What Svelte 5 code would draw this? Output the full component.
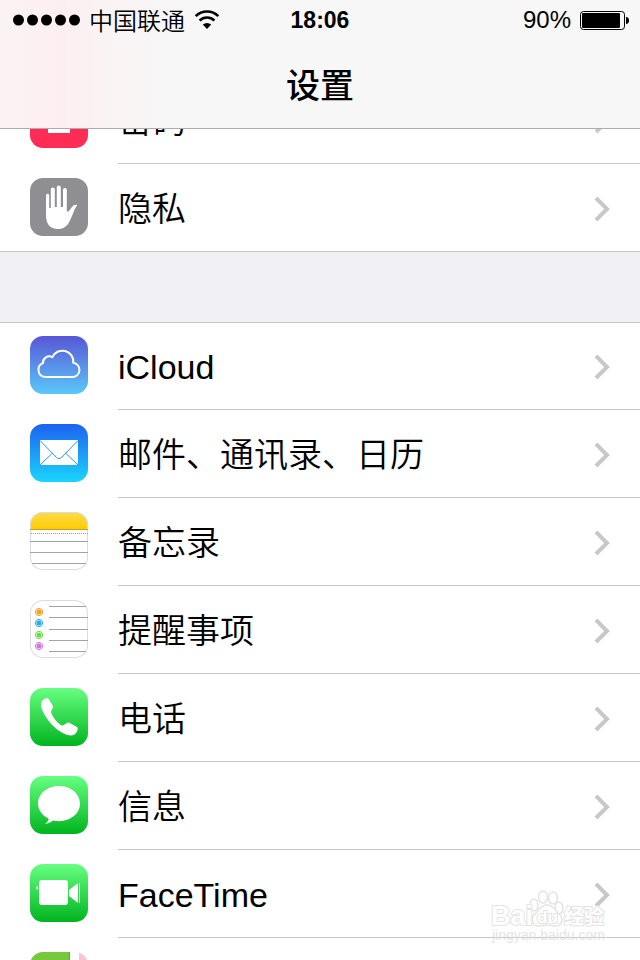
<script lang="ts">
  interface SettingsItem {
    icon: string;
    label: string;
  }

  const groups: SettingsItem[][] = [
    [
      { icon: "passcode", label: "密码" },
      { icon: "privacy", label: "隐私" },
    ],
    [
      { icon: "icloud", label: "iCloud" },
      { icon: "mail", label: "邮件、通讯录、日历" },
      { icon: "notes", label: "备忘录" },
      { icon: "reminders", label: "提醒事项" },
      { icon: "phone", label: "电话" },
      { icon: "messages", label: "信息" },
      { icon: "facetime", label: "FaceTime" },
      { icon: "maps", label: "地图" },
    ],
  ];

  const reminderDots = [
    { y: 12, color: "#ff9c1c" },
    { y: 23, color: "#1fadf8" },
    { y: 35, color: "#68dc45" },
    { y: 46, color: "#cf75e6" },
  ];
</script>

<div class="screen">
  <header class="navbar">
    <div class="status">
      <div class="carrier">
        <svg width="67" height="12" viewBox="0 0 67 12" aria-hidden="true">
          {#each [0, 1, 2, 3, 4] as n (n)}
            <circle cx={5.5 + n * 14} cy="6" r="5.5" />
          {/each}
        </svg>
        <span>中国联通</span>
        <svg width="26" height="20" viewBox="0 0 26 20" aria-hidden="true">
          <path d="M1.7 6.2a16 16 0 0 1 22.6 0" fill="none" stroke="#000" stroke-width="2.6" />
          <path d="M5.6 10.5a10.6 10.6 0 0 1 14.8 0" fill="none" stroke="#000" stroke-width="2.6" />
          <path d="M13 19l-4.200-4.400a6 6 0 0 1 8.400 0z" />
        </svg>
      </div>
      <time class="clock">18:06</time>
      <div class="power">
        <span>90%</span>
        <svg width="49" height="19" viewBox="0 0 49 19" aria-hidden="true">
          <rect x="0.5" y="0.5" width="44" height="18" rx="3" fill="none" stroke="#000" />
          <rect x="2" y="2" width="38" height="15" rx="1" />
          <path d="M46 6c2 0 3 1.5 3 3.5s-1 3.5-3 3.5z" />
        </svg>
      </div>
    </div>
    <h1>设置</h1>
  </header>

  <main>
    {#each groups as group, g (g)}
      <ul class="group">
        {#each group as item (item.icon)}
          <li>
            <a class="row" href={`#${item.icon}`}>
              <span class="icon {item.icon}">
                <svg viewBox="0 0 58 58" aria-hidden="true">
                  {#if item.icon === "passcode"}
                    <path d="M18 26h22v17H18z" fill="#fff" />
                    <path d="M22 27v-6a7 7 0 0 1 14 0v6" fill="none" stroke="#fff" stroke-width="4" />
                    <path d="M28 33h2v6h-2z" fill="#ff2d55" />
                  {:else if item.icon === "privacy"}
                    <path
                      d="M16 17.3a1.6 1.6 0 0 1 3.2 0V30h1.6V11.6a2 2 0 0 1 4 0V29h2V9.6a2 2 0 0 1 4 0V29h2.200V11.800a1.900 1.900 0 0 1 3.800 0V32c0 2 1.200 2.200 2.300.8l3-4c1.400-1.900 3.300-2.600 5.300-1.800-2.500 3-3.300 6-4.800 9.500C39.500 43.500 37.500 51 28 51c-8 0-12-5-12-14z"
                      fill="#fff"
                    />
                  {:else if item.icon === "icloud"}
                    <path
                      d="M15 41A7.3 7.3 0 0 1 13 27A6.2 6.2 0 0 1 22.3 21.2A11 11 0 0 1 43.3 26.8A7.2 7.2 0 0 1 43.5 41Z"
                      fill="none"
                      stroke="#fff"
                      stroke-width="2"
                      stroke-linejoin="round"
                    />
                  {:else if item.icon === "mail"}
                    <path d="M10 16h38v25H10z" fill="#fff" />
                    <path
                      d="M10 16.5L26.5 33.5Q29 36 31.5 33.5L48 16.5M10 41L22.500 29M48 41L35.5 29"
                      fill="none"
                      stroke="#2b98ef"
                    />
                  {:else if item.icon === "notes"}
                    <path d="M0 17.5h58" stroke="#c3a12c" />
                    <path d="M1 21.5h57" stroke="#999" stroke-dasharray="1 1" />
                    <path d="M0 29.5h58M0 40.5h58M2 51.5h54" stroke="#a3a3a3" />
                  {:else if item.icon === "reminders"}
                    {#each reminderDots as dot (dot.y)}
                      <circle cx="9" cy={dot.y} r="3.6" fill="none" stroke={dot.color} />
                      <circle cx="9" cy={dot.y} r="2.5" fill={dot.color} />
                    {/each}
                    <path d="M19 6.5h37M19 17.5h39M19 29.5h39M19 40.5h39M19 51.5h37" stroke="#a3a3a3" />
                  {:else if item.icon === "phone"}
                    <path
                      d="M11 15c.8-2.5 3-4.2 5.5-5 1-.3 1.7.2 2.2 1l4 6.5c.7 1.2.5 2-.3 3.200-1.300 1.800-1.700 3-1 4.700 2 4.600 5.300 8.500 9 11.300 1.500 1 2.500.9 4.100-.3l2.500-1.500c1-.6 1.900-.4 2.800.1l6.700 3.800c1 .6 1.500 1.300 1.200 2.500-.8 3.500-3.300 6.200-6.500 6.200-5.700 0-13-4.500-18.500-10C16.500 31 10 21 11 15z"
                      fill="#fff"
                    />
                  {:else if item.icon === "messages"}
                    <path
                      d="M29 10c11.7 0 21 7.8 21 17.6S40.7 45.2 29 45.2c-2 0-4-.2-5.8-.7-2.3 1.9-5.2 3.2-8.2 3.200 2-1.200 3.500-3 3.700-5C12.200 39.700 8 34 8 27.600 8 17.800 17.300 10 29 10z"
                      fill="#fff"
                    />
                  {:else if item.icon === "facetime"}
                    <rect x="9" y="16" width="29" height="25" rx="3" fill="#fff" />
                    <path d="M39 26l9-7v20l-9-7zM49 19h1v20h-1zM8 22v4q-2-.5-2-2t2-2z" fill="#fff" />
                  {:else if item.icon === "maps"}
                    <path d="M0 0h39v58H0z" fill="#76c83c" />
                    <path d="M39.5 0v58" stroke="#5fa52f" />
                    <path d="M40 0h9v58h-9z" fill="#fff" />
                    <path d="M49 0h9v58h-9z" fill="#fbc3d2" />
                  {/if}
                </svg>
              </span>
              <span class="cell">
                <span class="label">{item.label}</span>
                <svg class="chevron" width="18" height="26" viewBox="0 0 18 26" aria-hidden="true">
                  <path d="M3 2l11 11L3 24" fill="none" stroke="#c7c7cc" stroke-width="4" />
                </svg>
              </span>
            </a>
          </li>
        {/each}
      </ul>
    {/each}
  </main>

  <svg class="watermark" width="120" height="60" viewBox="0 0 120 60" aria-hidden="true">
    <g fill="#fff" stroke="#dedede" stroke-width="1.5">
      <ellipse cx="44" cy="17" rx="4" ry="6" />
      <ellipse cx="53" cy="9" rx="4.5" ry="6" />
      <ellipse cx="63" cy="10" rx="4.5" ry="6" />
      <ellipse cx="69" cy="20" rx="4" ry="6" />
      <path d="M57 17c-7 0-8 6-12 9-5 4-3 13 4 12 5-1 11-1 16 0 7 1 9-8 4-12-4-3-5-9-12-9z" />
      <g class="outlined">
        <text class="latin" x="1" y="37">Bai</text>
        <text class="du" x="47" y="35">du</text>
        <text class="cjk" x="74" y="36">经验</text>
      </g>
    </g>
    <text class="site" x="2" y="52">jingyan.baidu.com</text>
  </svg>
</div>

<style>
  :global(body) {
    margin: 0;
    background: #fff;
  }
  .screen {
    position: relative;
    height: 100vh;
    overflow: hidden;
    color: #000;
    font-family: "Liberation Sans", "Noto Sans CJK SC", sans-serif;
  }
  .navbar {
    position: relative;
    z-index: 1;
    box-sizing: border-box;
    height: 129px;
    border-bottom: 1px solid #acacac;
    background: linear-gradient(90deg, #fbf3f3 0, #fdeff1 60px, #f9f3f4 110px, #f7f7f7 180px);
  }
  .status {
    display: grid;
    grid-template-columns: 1fr auto 1fr;
    align-items: center;
    height: 40px;
    padding: 0 11px;
    font-size: 24px;
    line-height: 40px;
  }
  .carrier,
  .power {
    display: flex;
    align-items: center;
    gap: 9px;
  }
  .carrier {
    padding-left: 2px;
    font-family: "Noto Sans CJK SC", sans-serif;
    font-weight: 350;
  }
  .power {
    justify-content: flex-end;
  }
  .clock {
    font-size: 23px;
    font-weight: 700;
  }
  h1 {
    margin: 0;
    font: 500 34px/88px "Noto Sans CJK SC", sans-serif;
    text-align: center;
  }
  /* the list is scrolled part of a row beneath the bar */
  main {
    margin-top: -53px;
    background: #efeff4;
  }
  .group {
    margin: 0 0 70px;
    padding: 0;
    list-style: none;
    background: #fff;
    border-bottom: 1px solid #c8c7cc;
  }
  .group + .group {
    border-top: 1px solid #c8c7cc;
  }
  /* rows share their edge pixel with the group's own borders */
  .group + .group li:first-child {
    margin-top: -1px;
  }
  .group li:last-child {
    margin-bottom: -1px;
  }
  .row {
    display: flex;
    align-items: flex-start;
    gap: 30px;
    height: 88px;
    padding-left: 30px;
    color: inherit;
    text-decoration: none;
  }
  .cell {
    display: flex;
    flex: 1;
    align-items: center;
    justify-content: space-between;
    box-sizing: border-box;
    height: 100%;
    padding: 2px 29px 0 0;
    box-shadow: inset 0 -1px #c8c7cc;
  }
  .group li:last-child .cell {
    box-shadow: none;
  }
  .label {
    font-size: 34px;
    font-weight: 350;
    line-height: 48px;
  }
  .icon {
    width: 58px;
    height: 58px;
    margin-top: 14px;
    border-radius: 13px;
    overflow: hidden;
  }
  .icon svg {
    display: block;
    width: 58px;
    height: 58px;
  }
  .passcode {
    background: #ff2d55;
  }
  .privacy {
    background: #8e8e93;
  }
  .icloud {
    background: linear-gradient(#5856d6, #5ac8fa);
  }
  .mail {
    background: linear-gradient(#1d62f0, #1ad5fd);
  }
  .notes {
    background: linear-gradient(#ffdb4c, #ffcc00 17px, #fff 17px);
  }
  .reminders {
    background: #fff;
  }
  .notes,
  .reminders {
    box-shadow: inset 0 0 0 1px #dcdcdc;
  }
  .phone,
  .messages,
  .facetime {
    background: linear-gradient(#67ff81, #01b41f);
  }
  .watermark {
    position: absolute;
    right: 30px;
    bottom: 12px;
    opacity: 0.8;
  }
  .outlined {
    font-weight: 700;
    stroke-width: 2px;
    paint-order: stroke;
  }
  .latin {
    font-size: 27px;
  }
  .cjk {
    font-size: 20px;
  }
  .du {
    font-size: 17px;
  }
  .site {
    font-size: 14px;
    fill: #dedede;
  }
</style>
